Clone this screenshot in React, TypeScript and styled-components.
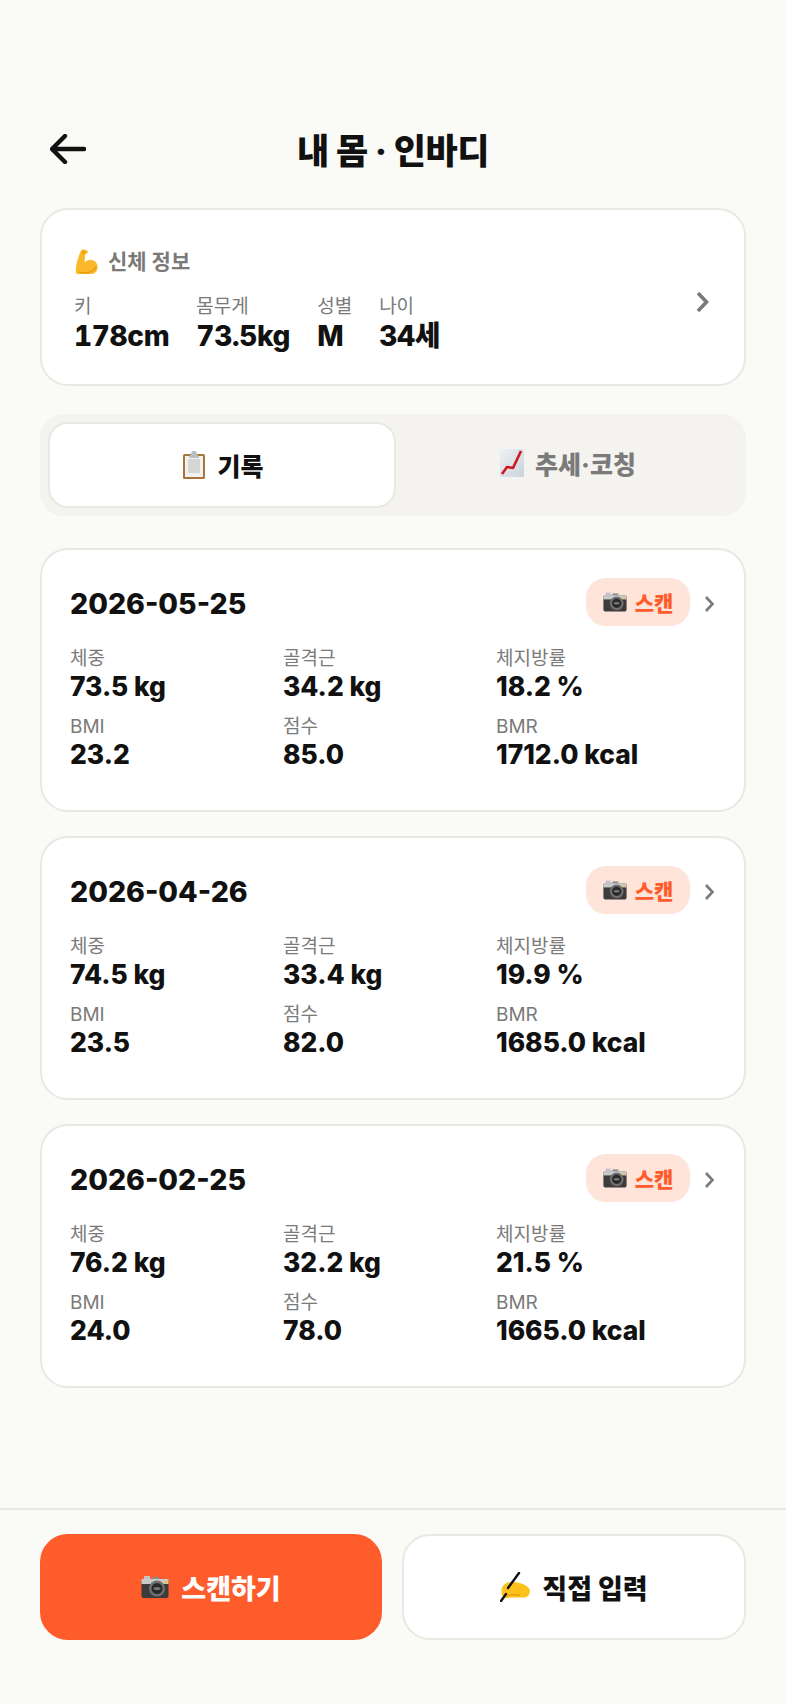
import * as React from 'react'
import styled, { createGlobalStyle } from 'styled-components'

const GlobalStyle = createGlobalStyle`
  html, body {
    margin: 0;
    padding: 0;
    background: #fafaf6;
  }
  * {
    box-sizing: border-box;
  }
  body {
    font-family: Inter, "Noto Sans CJK KR", "Noto Sans", sans-serif;
    color: #111111;
  }
`

const Page = styled.div`
  width: 786px;
  height: 1704px;
  display: flex;
  flex-direction: column;
  background: #fafaf6;
`

const Header = styled.header`
  display: flex;
  align-items: center;
  justify-content: space-between;
  height: 88px;
  margin-top: 104px;
  padding: 0 50px;
`

const BackButton = styled.div`
  display: flex;
  width: 40px;
  padding-top: 2px;
`

const Title = styled.h1`
  margin: 0;
  font-size: 35px;
  font-weight: 800;
  letter-spacing: -0.5px;
`

const HeaderSpacer = styled.div`
  width: 40px;
`

const Content = styled.main`
  flex: 1;
  display: flex;
  flex-direction: column;
  padding: 16px 40px 0;
`

const Card = styled.section`
  background: #ffffff;
  border: 2px solid #e9e9e3;
  border-radius: 28px;
`

const ProfileCard = styled(Card)`
  display: flex;
  align-items: center;
  justify-content: space-between;
  height: 178px;
  padding: 8px 35px 0 32px;
`

const ProfileTitle = styled.div`
  display: flex;
  align-items: center;
  gap: 9px;
  font-size: 21px;
  line-height: 26px;
  font-weight: 700;
  color: #7a7a7a;
  margin-bottom: 20px;
  padding-left: 1px;
`

const ProfileRow = styled.div`
  display: flex;
  gap: 27px;
`

const Label = styled.div`
  font-size: 19px;
  line-height: 24px;
  color: #7a7a7a;
`

const ProfileValue = styled.div`
  font-size: 28px;
  line-height: 34px;
  font-weight: 800;
  font-variant-numeric: tabular-nums;
  letter-spacing: -0.3px;
`

const ProfileChevron = styled.div`
  display: flex;
  margin-top: 2px;
`

const Tabs = styled.div`
  display: flex;
  height: 102px;
  margin: 28px 0 32px;
  padding: 8px;
  background: #f4f3ef;
  border-radius: 24px;
`

const Tab = styled.div<{ $active?: boolean }>`
  display: flex;
  align-items: center;
  justify-content: center;
  gap: 11px;
  font-size: 25px;
  font-weight: 800;
  border-radius: 20px;
  padding-left: 2px;
  padding-bottom: ${({ $active }) => ($active ? '0' : '4px')};
  width: ${({ $active }) => ($active ? '348px' : '342px')};
  color: ${({ $active }) => ($active ? '#111111' : '#7a7a7a')};
  background: ${({ $active }) => ($active ? '#ffffff' : 'transparent')};
  border: 2px solid ${({ $active }) => ($active ? '#e9e9e3' : 'transparent')};
`

const RecordList = styled.div`
  display: flex;
  flex-direction: column;
  gap: 24px;
`

const RecordCard = styled(Card)`
  height: 264px;
  padding: 28px 28px 0;
`

const RecordHeader = styled.div`
  display: flex;
  align-items: center;
  height: 48px;
  margin-bottom: 20px;
`

const RecordDate = styled.div`
  flex: 1;
  font-size: 28.5px;
  font-weight: 800;
  padding-top: 3px;
`

const ScanBadge = styled.div`
  display: flex;
  align-items: center;
  justify-content: center;
  gap: 8px;
  width: 104px;
  height: 48px;
  margin-right: 13px;
  border-radius: 20px;
  background: #ffe4da;
  color: #ff5c2b;
  font-size: 21px;
  font-weight: 800;
`

const RecordChevron = styled.div`
  display: flex;
  margin: 3px 1px 0 1px;
`

const MetricGrid = styled.div`
  display: grid;
  grid-template-columns: repeat(3, 213px);
  row-gap: 13px;
  padding-top: 1px;
`

const MetricValue = styled.div`
  font-size: 26.4px;
  line-height: 31px;
  font-weight: 800;
`

const Footer = styled.footer`
  display: grid;
  grid-template-columns: 342px 1fr;
  gap: 20px;
  height: 196px;
  padding: 24px 40px 0;
  border-top: 2px solid #e9e9e3;
`

const ActionButton = styled.div<{ $primary?: boolean }>`
  display: flex;
  align-items: center;
  justify-content: center;
  gap: 12px;
  height: 106px;
  border-radius: 28px;
  font-size: 27px;
  font-weight: 800;
  color: ${({ $primary }) => ($primary ? '#ffffff' : '#111111')};
  background: ${({ $primary }) => ($primary ? '#ff5c2b' : '#ffffff')};
  border: 2px solid ${({ $primary }) => ($primary ? '#ff5c2b' : '#e9e9e3')};
`

const BackArrow = () => (
  <svg width="36" height="30" viewBox="0 0 36 30" fill="none" stroke="#111" strokeWidth="4.4" strokeLinecap="round" strokeLinejoin="round">
    <path d="M34 15H3M15 2 2 15l13 13" />
  </svg>
)

const Chevron = ({ width, height, weight }: { width: number; height: number; weight: number }) => (
  <svg width={width} height={height} viewBox={`0 0 ${width} ${height}`} fill="none" stroke="#7a7a7a" strokeWidth={weight} strokeLinejoin="miter">
    <path d={`M2 1 ${width - 2.5} ${height / 2} 2 ${height - 1}`} />
  </svg>
)

const Muscle = () => (
  <svg width="24" height="26" viewBox="0 0 24 26">
    <path d="M6 1.500c1-1.500 5-1.500 6.500.5.8 1.400-.4 2.600-2.200 3.200L9.500 13.500c2.500-2.800 6.100-3.800 9.500-1.800 3 1.800 4.400 5.300 3.400 8.500-.8 2.800-3.200 4.800-6.400 4.800H3.600c-1.800 0-2.800-1-2.800-2.600C.8 16 3 8 6 1.500z" fill="#fbb829" />
    <path d="M4 23c3 1 8 1 11 0 3-1 5-3 6-5" fill="none" stroke="#e8930c" strokeWidth="1.200" />
    <circle cx="8.500" cy="3.500" r="1.200" fill="#e8930c" />
  </svg>
)

const Clipboard = () => (
  <svg width="24" height="28" viewBox="0 0 24 28">
    <rect x="1" y="3" width="22" height="25" rx="1.500" fill="#a9743c" />
    <rect x="3" y="5" width="18" height="21" fill="#f1f1ef" />
    <rect x="6" y="8" width="12" height="14" fill="#d6d6d4" />
    <path d="M7 6l2-3 1-3h4l1 3 2 3v1H7z" fill="#b8bec6" />
  </svg>
)

const ChartUp = () => (
  <svg width="24" height="28" viewBox="0 0 24 28">
    <defs>
      <linearGradient id="chartBg" x1="0" y1="0" x2="1" y2="1">
        <stop offset="0" stopColor="#eef1f5" />
        <stop offset="1" stopColor="#ccd3dc" />
      </linearGradient>
    </defs>
    <rect width="24" height="28" fill="url(#chartBg)" />
    <path d="M2 25l5-7 6 1L21 2" fill="none" stroke="#d2161e" strokeWidth="2.600" strokeLinejoin="round" />
  </svg>
)

const Camera = ({ size }: { size: number }) => (
  <svg width={size} height={size} viewBox="0 0 28 28">
    <rect x="3" y="3" width="6" height="4" fill="#c4c4c4" />
    <rect x="11" y="4" width="7" height="3" fill="#8a8a8a" />
    <rect x="0.500" y="6" width="27" height="19" rx="2" fill="#3c3c3c" />
    <rect x="0.500" y="6" width="27" height="5" fill="#c9c9c9" />
    <circle cx="16" cy="15.500" r="8" fill="#707070" />
    <circle cx="16" cy="15.500" r="5.500" fill="#2a2a2a" />
    <ellipse cx="16" cy="15.500" rx="3.500" ry="1.500" fill="#777" />
    <rect x="23" y="8" width="3" height="2.500" fill="#e5c44a" />
  </svg>
)

const Writing = () => (
  <svg width="30" height="30" viewBox="0 0 30 30">
    <path d="M3 14c2.500-3 5-4.500 8-3.500l3-.5c3.500 0 6 1 8.500 2 3 1.300 7 3 7.300 6.500.2 4-1.800 6.500-5.300 7H10c-3 1.300-7 .5-8-2.500-1-3-.8-6.500 1-9z" fill="#fcc21b" />
    <path d="M7 23.500c4-1 9-1 13 0" fill="none" stroke="#e49a10" strokeWidth="1.200" />
    <path d="M1 29 6 22M8 16 19 1" stroke="#111" strokeWidth="2.400" strokeLinecap="round" />
  </svg>
)

const profile = [
  { label: '키', value: '178cm' },
  { label: '몸무게', value: '73.5kg' },
  { label: '성별', value: 'M' },
  { label: '나이', value: '34세' },
]

const records = [
  { date: '2026-05-25', weight: '73.5 kg', muscle: '34.2 kg', fat: '18.2 %', bmi: '23.2', score: '85.0', bmr: '1712.0 kcal' },
  { date: '2026-04-26', weight: '74.5 kg', muscle: '33.4 kg', fat: '19.9 %', bmi: '23.5', score: '82.0', bmr: '1685.0 kcal' },
  { date: '2026-02-25', weight: '76.2 kg', muscle: '32.2 kg', fat: '21.5 %', bmi: '24.0', score: '78.0', bmr: '1665.0 kcal' },
]

const App = () => (
  <Page>
    <GlobalStyle />
    <Header>
      <BackButton><BackArrow /></BackButton>
      <Title>내 몸 · 인바디</Title>
      <HeaderSpacer />
    </Header>
    <Content>
      <ProfileCard>
        <div>
          <ProfileTitle><Muscle />신체 정보</ProfileTitle>
          <ProfileRow>
            {profile.map((item) => (
              <div key={item.label}>
                <Label>{item.label}</Label>
                <ProfileValue>{item.value}</ProfileValue>
              </div>
            ))}
          </ProfileRow>
        </div>
        <ProfileChevron><Chevron width={13} height={20} weight={3.6} /></ProfileChevron>
      </ProfileCard>
      <Tabs>
        <Tab $active><Clipboard />기록</Tab>
        <Tab><ChartUp />추세·코칭</Tab>
      </Tabs>
      <RecordList>
        {records.map((record) => (
          <RecordCard key={record.date}>
            <RecordHeader>
              <RecordDate>{record.date}</RecordDate>
              <ScanBadge><Camera size={24} />스캔</ScanBadge>
              <RecordChevron><Chevron width={11} height={16} weight={2.6} /></RecordChevron>
            </RecordHeader>
            <MetricGrid>
              <div><Label>체중</Label><MetricValue>{record.weight}</MetricValue></div>
              <div><Label>골격근</Label><MetricValue>{record.muscle}</MetricValue></div>
              <div><Label>체지방률</Label><MetricValue>{record.fat}</MetricValue></div>
              <div><Label>BMI</Label><MetricValue>{record.bmi}</MetricValue></div>
              <div><Label>점수</Label><MetricValue>{record.score}</MetricValue></div>
              <div><Label>BMR</Label><MetricValue>{record.bmr}</MetricValue></div>
            </MetricGrid>
          </RecordCard>
        ))}
      </RecordList>
    </Content>
    <Footer>
      <ActionButton $primary><Camera size={28} />스캔하기</ActionButton>
      <ActionButton><Writing />직접 입력</ActionButton>
    </Footer>
  </Page>
)

export default App
